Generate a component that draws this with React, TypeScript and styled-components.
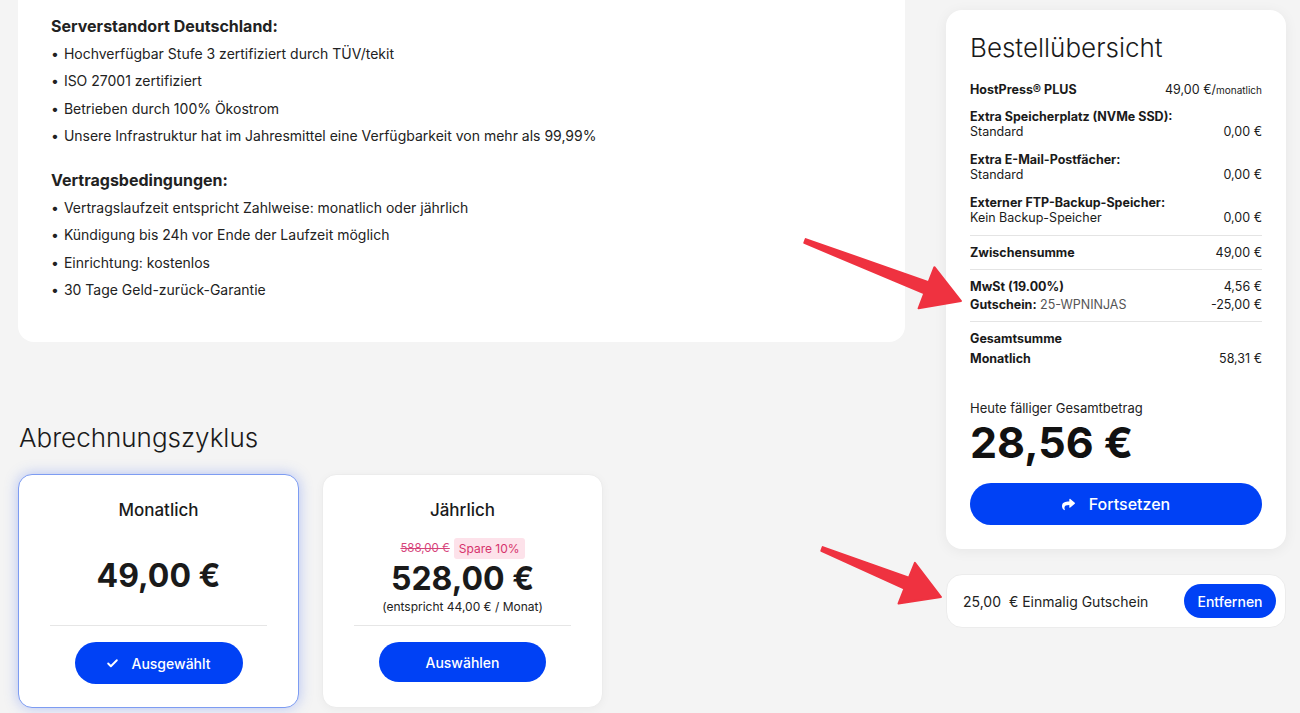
import React from 'react';
import styled, { createGlobalStyle } from 'styled-components';
import { Check } from 'lucide-react';
import { FaShare } from 'react-icons/fa';

const GlobalStyle = createGlobalStyle`
  html, body {
    margin: 0;
    padding: 0;
    background: #f4f4f4;
    font-family: Inter, 'Noto Sans', sans-serif;
    color: #1d1d1f;
  }
  * { box-sizing: border-box; }
`;

const Page = styled.div`
  position: relative;
  width: 1300px;
  height: 713px;
  overflow: hidden;
  display: flex;
  gap: 41px;
  padding-left: 18px;
`;

const MainColumn = styled.div`
  width: 887px;
  display: flex;
  flex-direction: column;
`;

const InfoCard = styled.div`
  background: #fff;
  border-radius: 0 0 16px 16px;
  padding: 15px 33px 34px;
  height: 342px;
`;

const InfoHeading = styled.h4`
  margin: 0 0 3px;
  font-size: 16px;
  font-weight: 700;
  line-height: 22px;
  color: #222;
`;

const BulletList = styled.ul`
  list-style: none;
  margin: 0 0 20px;
  padding: 0;
`;

const Bullet = styled.li`
  font-size: 14px;
  line-height: 27.3px;
  color: #222;
  &::before {
    content: '•';
    margin-right: 5px;
  }
`;

const SectionTitle = styled.h2`
  margin: 80px 0 20px 1px;
  font-size: 26px;
  font-weight: 300;
  line-height: 32px;
  color: #1a1a1a;
`;

const CycleRow = styled.div`
  display: flex;
  gap: 23px;
`;

const CycleCard = styled.div<{ $selected?: boolean }>`
  width: 281px;
  height: 234px;
  background: #fff;
  border-radius: 14px;
  border: 1px solid ${p => (p.$selected ? '#7d9cf2' : '#ececec')};
  box-shadow: ${p =>
    p.$selected ? '0 0 14px rgba(60, 100, 240, 0.35)' : '0 2px 10px rgba(0, 0, 0, 0.04)'};
  display: flex;
  flex-direction: column;
  align-items: center;
  padding: 23px 31px 0;
`;

const CycleName = styled.div`
  font-size: 17px;
  font-weight: 500;
  line-height: 24px;
  color: #1a1a1a;
`;

const PriceBlock = styled.div`
  height: 103px;
  padding-top: 5px;
  display: flex;
  flex-direction: column;
  align-items: center;
  justify-content: center;
`;

const OldPriceRow = styled.div`
  display: flex;
  align-items: center;
  gap: 4px;
  margin-bottom: 1px;
`;

const OldPrice = styled.span`
  font-size: 11.5px;
  color: #d6447a;
  text-decoration: line-through;
`;

const SaveBadge = styled.span`
  font-size: 12px;
  color: #d6336c;
  background: #fde2ea;
  border-radius: 3px;
  padding: 3px 5px;
  line-height: 15px;
`;

const BigPrice = styled.div`
  font-size: 32px;
  font-weight: 700;
  line-height: 38px;
  color: #1a1a1a;
`;

const PriceNote = styled.div`
  font-size: 12px;
  line-height: 16px;
  margin-top: 1px;
  color: #222;
`;

const Divider = styled.hr`
  width: 100%;
  border: 0;
  border-top: 1px solid #e6e6e6;
  margin: 0;
`;

const PillButton = styled.button<{ $w?: number; $h?: number }>`
  display: inline-flex;
  align-items: center;
  justify-content: center;
  gap: 12px;
  width: ${p => (p.$w ? `${p.$w}px` : '100%')};
  height: ${p => p.$h || 42}px;
  border: 0;
  border-radius: 999px;
  background: #0041f5;
  color: #fff;
  font-family: inherit;
  font-size: 14px;
  font-weight: 500;
  cursor: pointer;
`;

const CycleButtonWrap = styled.div`
  margin-top: 16px;
`;

const SideColumn = styled.div`
  width: 340px;
  padding-top: 10px;
  display: flex;
  flex-direction: column;
  gap: 25px;
`;

const SummaryCard = styled.div`
  background: #fff;
  border-radius: 16px;
  box-shadow: 0 2px 14px rgba(0, 0, 0, 0.06);
  padding: 20px 24px 24px;
`;

const SummaryTitle = styled.h2`
  margin: 0 0 16px;
  font-size: 26px;
  font-weight: 300;
  line-height: 36px;
  color: #1a1a1a;
`;

const SummarySection = styled.div<{ $border?: boolean }>`
  border-top: ${p => (p.$border ? '1px solid #e4e4e4' : 'none')};
  padding: ${p => (p.$border ? '8px 0 7px' : '0 0 10px')};
  display: flex;
  flex-direction: column;
`;

const Line = styled.div<{ $tall?: boolean; $gap?: number }>`
  display: flex;
  justify-content: space-between;
  align-items: baseline;
  font-size: 12.5px;
  line-height: ${p => (p.$tall ? '18px' : '15px')};
  margin-top: ${p => p.$gap || 0}px;
  color: #1a1a1a;
`;

const Strong = styled.span`
  font-weight: 700;
`;

const Muted = styled.span`
  color: #555;
`;

const Unit = styled.span`
  font-size: 10px;
`;

const Group = styled.div`
  display: flex;
  flex-direction: column;
  margin-top: 13px;

  ${Line} + & {
    margin-top: 11px;
  }
`;

const DueLabel = styled.div`
  margin-top: 24px;
  font-size: 13px;
  line-height: 18px;
  color: #222;
`;

const DueAmount = styled.div`
  font-size: 43px;
  font-weight: 700;
  line-height: 50px;
  color: #111;
  margin-bottom: 16px;
`;

const ContinueButton = styled(PillButton)`
  font-size: 16px;
  gap: 14px;
`;

const CouponCard = styled.div`
  background: #fff;
  border-radius: 16px;
  border: 1px solid #ececec;
  height: 54px;
  display: flex;
  align-items: center;
  justify-content: space-between;
  padding: 0 9px 0 16px;
`;

const CouponText = styled.span`
  font-size: 14px;
  color: #222;
  white-space: pre;
`;

const ArrowLayer = styled.svg`
  position: absolute;
  left: 0;
  top: 0;
  pointer-events: none;
`;

const Arrow: React.FC<{ x1: number; y1: number; x2: number; y2: number }> = ({ x1, y1, x2, y2 }) => {
  const dx = x2 - x1;
  const dy = y2 - y1;
  const len = Math.hypot(dx, dy);
  const ux = dx / len;
  const uy = dy / len;
  const px = -uy;
  const py = ux;
  const headLen = 37;
  const headW = 22;
  const tail = 2;
  const shaft = 6;
  const bx = x2 - ux * headLen;
  const by = y2 - uy * headLen;
  const pts = [
    [x1 + px * tail, y1 + py * tail],
    [bx + px * shaft, by + py * shaft],
    [bx + px * headW, by + py * headW],
    [x2, y2],
    [bx - px * headW, by - py * headW],
    [bx - px * shaft, by - py * shaft],
    [x1 - px * tail, y1 - py * tail],
  ]
    .map(p => p.map(v => v.toFixed(1)).join(','))
    .join(' ');
  return <polygon points={pts} fill="#ef3240" strokeLinejoin="round" stroke="#ef3240" strokeWidth={2} />;
};

const App: React.FC = () => {
  return (
    <>
      <GlobalStyle />
      <Page>
        <MainColumn>
          <InfoCard>
            <InfoHeading>Serverstandort Deutschland:</InfoHeading>
            <BulletList>
              <Bullet>Hochverfügbar Stufe 3 zertifiziert durch TÜV/tekit</Bullet>
              <Bullet>ISO 27001 zertifiziert</Bullet>
              <Bullet>Betrieben durch 100% Ökostrom</Bullet>
              <Bullet>Unsere Infrastruktur hat im Jahresmittel eine Verfügbarkeit von mehr als 99,99%</Bullet>
            </BulletList>
            <InfoHeading>Vertragsbedingungen:</InfoHeading>
            <BulletList>
              <Bullet>Vertragslaufzeit entspricht Zahlweise: monatlich oder jährlich</Bullet>
              <Bullet>Kündigung bis 24h vor Ende der Laufzeit möglich</Bullet>
              <Bullet>Einrichtung: kostenlos</Bullet>
              <Bullet>30 Tage Geld-zurück-Garantie</Bullet>
            </BulletList>
          </InfoCard>

          <SectionTitle>Abrechnungszyklus</SectionTitle>
          <CycleRow>
            <CycleCard $selected>
              <CycleName>Monatlich</CycleName>
              <PriceBlock>
                <BigPrice>49,00 €</BigPrice>
              </PriceBlock>
              <Divider />
              <CycleButtonWrap>
                <PillButton $w={168}>
                  <Check size={13} strokeWidth={3.5} />
                  Ausgewählt
                </PillButton>
              </CycleButtonWrap>
            </CycleCard>
            <CycleCard>
              <CycleName>Jährlich</CycleName>
              <PriceBlock>
                <OldPriceRow>
                  <OldPrice>588,00 €</OldPrice>
                  <SaveBadge>Spare 10%</SaveBadge>
                </OldPriceRow>
                <BigPrice>528,00 €</BigPrice>
                <PriceNote>(entspricht 44,00 € / Monat)</PriceNote>
              </PriceBlock>
              <Divider />
              <CycleButtonWrap>
                <PillButton $w={167} $h={40}>Auswählen</PillButton>
              </CycleButtonWrap>
            </CycleCard>
          </CycleRow>
        </MainColumn>

        <SideColumn>
          <SummaryCard>
            <SummaryTitle>Bestellübersicht</SummaryTitle>
            <SummarySection>
              <Line>
                <Strong>HostPress® PLUS</Strong>
                <span>
                  49,00 €/<Unit>monatlich</Unit>
                </span>
              </Line>
              <Group>
                <Line><Strong>Extra Speicherplatz (NVMe SSD):</Strong></Line>
                <Line><span>Standard</span><span>0,00 €</span></Line>
              </Group>
              <Group>
                <Line><Strong>Extra E-Mail-Postfächer:</Strong></Line>
                <Line><span>Standard</span><span>0,00 €</span></Line>
              </Group>
              <Group>
                <Line><Strong>Externer FTP-Backup-Speicher:</Strong></Line>
                <Line><span>Kein Backup-Speicher</span><span>0,00 €</span></Line>
              </Group>
            </SummarySection>
            <SummarySection $border>
              <Line $tall><Strong>Zwischensumme</Strong><span>49,00 €</span></Line>
            </SummarySection>
            <SummarySection $border>
              <Line $tall>
                <Strong>MwSt (19.00%)</Strong>
                <span>4,56 €</span>
              </Line>
              <Line $tall>
                <span>
                  <Strong>Gutschein:</Strong> <Muted>25-WPNINJAS</Muted>
                </span>
                <span>-25,00 €</span>
              </Line>
            </SummarySection>
            <SummarySection $border>
              <Line $tall><Strong>Gesamtsumme</Strong></Line>
              <Line $tall $gap={2}><Strong>Monatlich</Strong><span>58,31 €</span></Line>
            </SummarySection>
            <DueLabel>Heute fälliger Gesamtbetrag</DueLabel>
            <DueAmount>28,56 €</DueAmount>
            <ContinueButton>
              <FaShare size={13} />
              Fortsetzen
            </ContinueButton>
          </SummaryCard>

          <CouponCard>
            <CouponText>25,00  € Einmalig Gutschein</CouponText>
            <PillButton $w={92} $h={34}>Entfernen</PillButton>
          </CouponCard>
        </SideColumn>

        <ArrowLayer width={1300} height={713}>
          <Arrow x1={805} y1={241} x2={961} y2={301} />
          <Arrow x1={822} y1={549} x2={941} y2={597} />
        </ArrowLayer>
      </Page>
    </>
  );
};

export default App;
